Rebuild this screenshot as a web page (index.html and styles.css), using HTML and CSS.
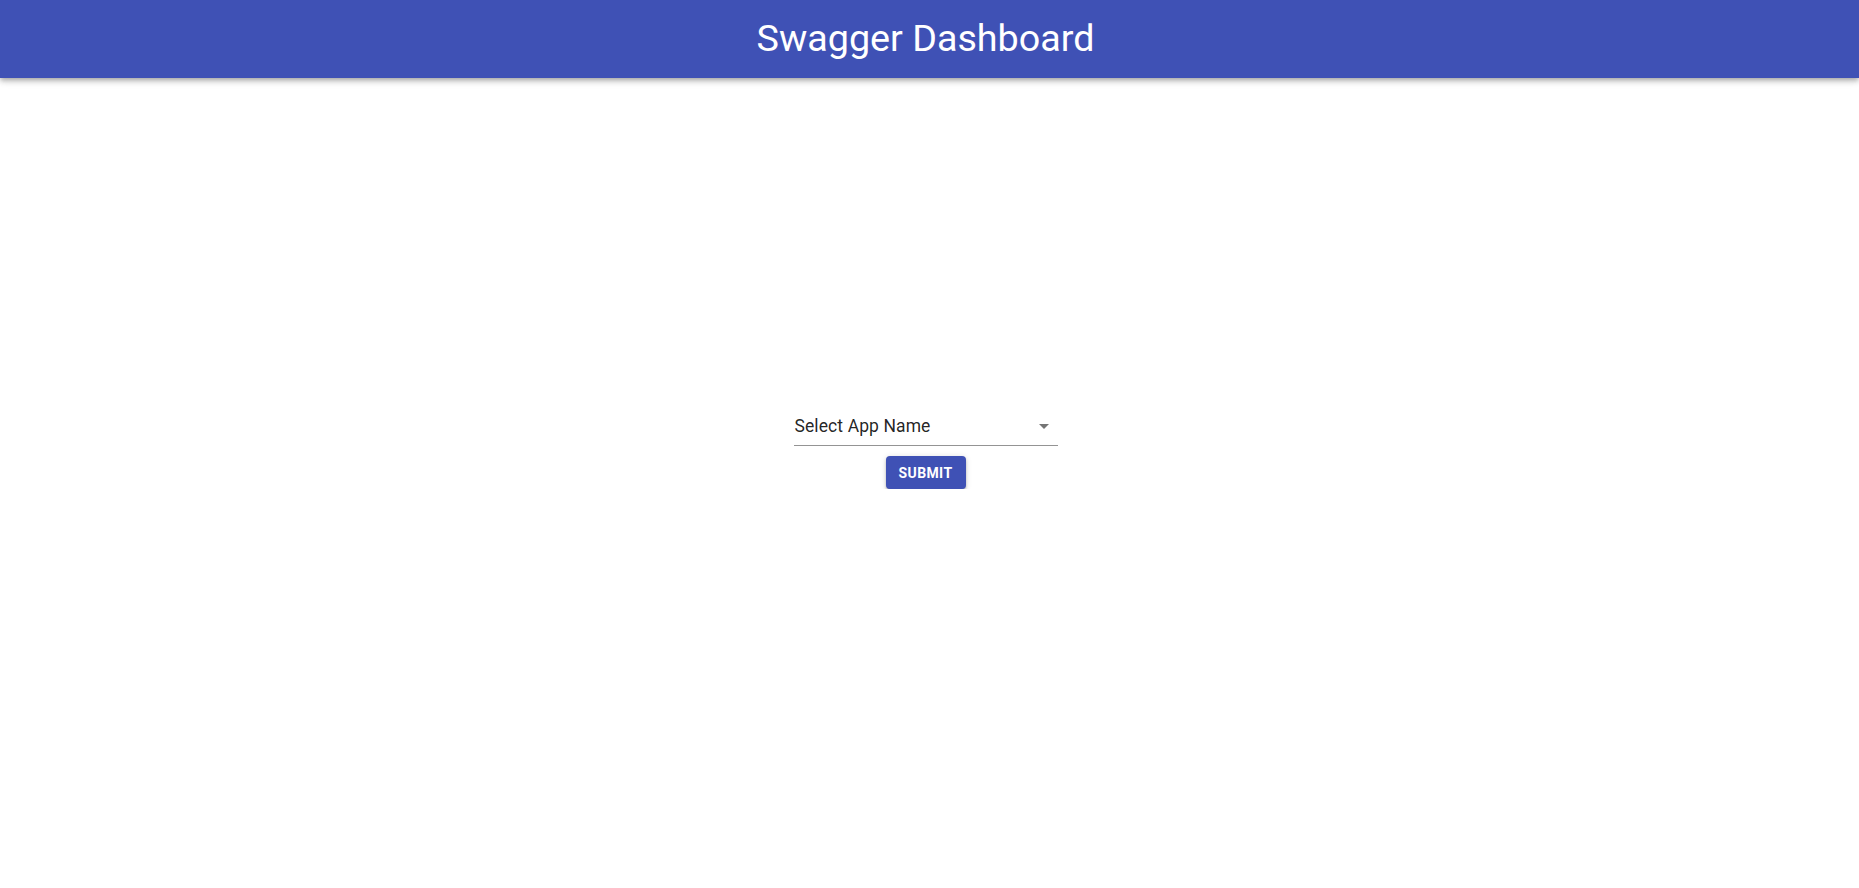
FILE: index.html
```html
<!DOCTYPE html>
<html>
<head>
<meta charset="utf-8">
<link rel="stylesheet" href="styles.css">
</head>
<body>
<header class="app-bar">
  <h1 class="title">Swagger Dashboard</h1>
</header>
<main class="content">
  <form class="form">
    <div class="select">
      <span class="select-label">Select App Name</span>
      <svg class="arrow" viewBox="0 0 24 24" width="24" height="24"><path d="M7 10l5 5 5-5z"/></svg>
    </div>
    <button type="button" class="submit">Submit</button>
  </form>
</main>
</body>
</html>
```
FILE: styles.css
```css
* { box-sizing: border-box; }
html, body { margin: 0; padding: 0; background: #fff; }
body { font-family: Roboto, "Liberation Sans", sans-serif; color: rgba(0,0,0,0.87); }
.app-bar {
  height: 78px;
  background: #3f51b5;
  box-shadow: 0 2px 4px -1px rgba(0,0,0,0.2), 0 4px 5px 0 rgba(0,0,0,0.14), 0 1px 10px 0 rgba(0,0,0,0.12);
  display: flex;
  align-items: center;
  justify-content: center;
  padding-right: 8px;
}
.title {
  margin: 0;
  color: #fff;
  font-size: 37.7px;
  font-weight: 400;
  line-height: 1;
}
.content {
  display: flex;
  justify-content: center;
  padding-top: 330px;
  padding-right: 8px;
}
.form {
  display: flex;
  flex-direction: column;
  align-items: center;
  gap: 10px;
}
.select {
  width: 264px;
  height: 38px;
  border-bottom: 1px solid rgba(0,0,0,0.42);
  display: flex;
  align-items: center;
  justify-content: space-between;
  padding: 0 0 1px 1px;
}
.select-label { font-size: 17.5px; letter-spacing: 0.1px; }
.arrow { fill: rgba(0,0,0,0.54); margin-right: 2px; }
.submit {
  width: 80px;
  height: 33px;
  border: none;
  border-radius: 4px;
  background: #3f51b5;
  color: #fff;
  font-family: Roboto, "Liberation Sans", sans-serif;
  font-size: 14px;
  font-weight: 700;
  letter-spacing: 0.4px;
  text-transform: uppercase;
  box-shadow: 0 3px 3px -2px rgba(0,0,0,0.3), 0 2px 3px 0 rgba(0,0,0,0.18), 0 1px 6px 0 rgba(0,0,0,0.14);
  padding: 0;
}
```
